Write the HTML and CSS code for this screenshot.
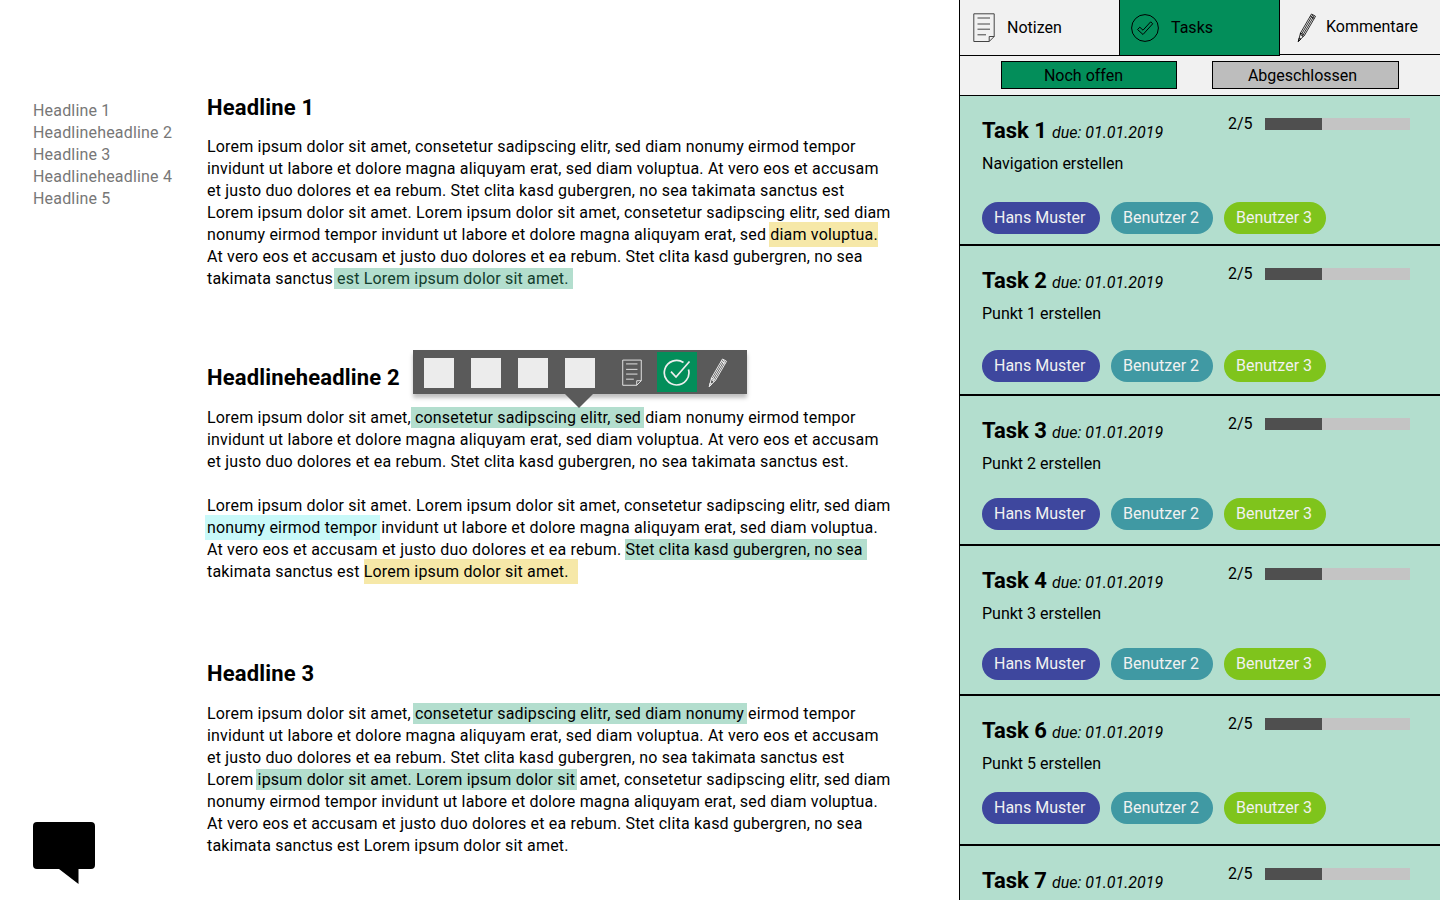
FILE: index.html
```html
<!DOCTYPE html>
<html lang="de">
<head>
<meta charset="utf-8">
<title>Tasks</title>
<link rel="stylesheet" href="styles.css">
</head>
<body>
<svg class="defs" aria-hidden="true">
  <symbol id="note" viewBox="0 0 22 30"><path d="M.8.8h20.4v22.7l-5 5H.8zM16.2 28.500v-5h5M4.500 5h12.500M4.500 11h12.500M4.500 16.200h12.500M4.500 21.800h8.500"/></symbol>
  <symbol id="pencil" viewBox="0 0 20 30"><path d="M14.500 1l4 2.300L7.500 22.300l-4-2.300zM15.800 1.800L4.800 20.800M17.200 2.600L6.200 21.600M13.300 3.200l4 2.300M3.500 20L1.300 28.500l6.200-6.200M3.500 20l.5 2.300 1.700-.3.100 2M1.300 28.500l.9-3.500 1.700 1z"/></symbol>
</svg>
<div class="app">
  <aside class="outline">
    <nav class="toc"><a>Headline 1</a><a>Headlineheadline 2</a><a>Headline 3</a><a>Headlineheadline 4</a><a>Headline 5</a></nav>
    <svg class="chat" viewBox="0 0 62 62"><path d="M4 0h54a4 4 0 0 1 4 4v39a4 4 0 0 1-4 4H45.500v15L26 47H4a4 4 0 0 1-4-4V4a4 4 0 0 1 4-4z"/></svg>
  </aside>
  <main class="doc">
    <section class="s1">
      <h2>Headline 1</h2>
      <p>Lorem ipsum dolor sit amet, consetetur sadipscing elitr, sed diam nonumy eirmod tempor<br>invidunt ut labore et dolore magna aliquyam erat, sed diam voluptua. At vero eos et accusam<br>et justo duo dolores et ea rebum. Stet clita kasd gubergren, no sea takimata sanctus est<br>Lorem ipsum dolor sit amet. Lorem ipsum dolor sit amet, consetetur sadipscing elitr, sed diam<br>nonumy eirmod tempor invidunt ut labore et dolore magna aliquyam erat, sed <mark class="yellow m1">diam voluptua.</mark><br>At vero eos et accusam et justo duo dolores et ea rebum. Stet clita kasd gubergren, no sea<br>takimata sanctus <mark class="m2">est Lorem ipsum dolor sit amet.</mark></p>
    </section>
    <section class="s2">
      <div class="head"><h2>Headlineheadline 2</h2>
        <div class="toolbar">
          <i class="swatch"></i><i class="swatch"></i><i class="swatch"></i><i class="swatch"></i>
          <svg class="t-note"><use href="#note"/></svg>
          <span class="t-check"><svg viewBox="0 0 28 28"><path d="M25.500 11.500A12.300 12.300 0 1 1 20.500 4.500M8 13.700l5 5.300L26.500 3.500"/></svg></span>
          <svg class="t-pencil"><use href="#pencil"/></svg>
        </div>
      </div>
      <p>Lorem ipsum dolor sit amet, <mark class="m3">consetetur sadipscing elitr, sed</mark> diam nonumy eirmod tempor<br>invidunt ut labore et dolore magna aliquyam erat, sed diam voluptua. At vero eos et accusam<br>et justo duo dolores et ea rebum. Stet clita kasd gubergren, no sea takimata sanctus est.<br><br>Lorem ipsum dolor sit amet. Lorem ipsum dolor sit amet, consetetur sadipscing elitr, sed diam<br><mark class="cyan m4">nonumy eirmod tempor</mark> invidunt ut labore et dolore magna aliquyam erat, sed diam voluptua.<br>At vero eos et accusam et justo duo dolores et ea rebum. <mark class="m5">Stet clita kasd gubergren, no sea</mark><br>takimata sanctus est <mark class="yellow m6">Lorem ipsum dolor sit amet.</mark></p>
    </section>
    <section class="s3">
      <h2>Headline 3</h2>
      <p>Lorem ipsum dolor sit amet, <mark class="m7">consetetur sadipscing elitr, sed diam nonumy</mark> eirmod tempor<br>invidunt ut labore et dolore magna aliquyam erat, sed diam voluptua. At vero eos et accusam<br>et justo duo dolores et ea rebum. Stet clita kasd gubergren, no sea takimata sanctus est<br>Lorem <mark class="m8">ipsum dolor sit amet. Lorem ipsum dolor sit</mark> amet, consetetur sadipscing elitr, sed diam<br>nonumy eirmod tempor invidunt ut labore et dolore magna aliquyam erat, sed diam voluptua.<br>At vero eos et accusam et justo duo dolores et ea rebum. Stet clita kasd gubergren, no sea<br>takimata sanctus est Lorem ipsum dolor sit amet.</p>
    </section>
  </main>
  <aside class="panel">
    <div class="tabs">
      <div class="tab notes"><svg><use href="#note"/></svg><span>Notizen</span></div>
      <div class="tab tasks-tab"><svg viewBox="0 0 28 28"><circle cx="14" cy="14" r="13.400"/><path d="M6.500 15.500l2.300-2.300 3.200 3 7.700-8.400 2 2L12 20.500z"/></svg><span>Tasks</span></div>
      <div class="tab comments"><svg><use href="#pencil"/></svg><span>Kommentare</span></div>
    </div>
    <div class="filters"><button class="open">Noch offen</button><button class="done">Abgeschlossen</button></div>
    <div class="list">
      <article class="task"><header><h3>Task 1</h3><em>due: 01.01.2019</em><div class="prog"><span>2/5</span><div class="bar"><i></i></div></div></header><p>Navigation erstellen</p><footer><b>Hans Muster</b><b>Benutzer 2</b><b>Benutzer 3</b></footer></article>
      <article class="task up2"><header><h3>Task 2</h3><em>due: 01.01.2019</em><div class="prog"><span>2/5</span><div class="bar"><i></i></div></div></header><p>Punkt 1 erstellen</p><footer><b>Hans Muster</b><b>Benutzer 2</b><b>Benutzer 3</b></footer></article>
      <article class="task up4"><header><h3>Task 3</h3><em>due: 01.01.2019</em><div class="prog"><span>2/5</span><div class="bar"><i></i></div></div></header><p>Punkt 2 erstellen</p><footer><b>Hans Muster</b><b>Benutzer 2</b><b>Benutzer 3</b></footer></article>
      <article class="task up4"><header><h3>Task 4</h3><em>due: 01.01.2019</em><div class="prog"><span>2/5</span><div class="bar"><i></i></div></div></header><p>Punkt 3 erstellen</p><footer><b>Hans Muster</b><b>Benutzer 2</b><b>Benutzer 3</b></footer></article>
      <article class="task up10"><header><h3>Task 6</h3><em>due: 01.01.2019</em><div class="prog"><span>2/5</span><div class="bar"><i></i></div></div></header><p>Punkt 5 erstellen</p><footer><b>Hans Muster</b><b>Benutzer 2</b><b>Benutzer 3</b></footer></article>
      <article class="task"><header><h3>Task 7</h3><em>due: 01.01.2019</em><div class="prog"><span>2/5</span><div class="bar"><i></i></div></div></header></article>
    </div>
  </aside>
</div>
</body>
</html>
```
FILE: styles.css
```css
* { box-sizing: border-box; }
body { margin: 0; background: #fff; color: #000; font: 16px/22px Roboto, sans-serif; letter-spacing: .18px; }
h2, h3, p { margin: 0; }
svg { fill: none; stroke: currentColor; flex: none; }
.defs { position: absolute; width: 0; height: 0; }
.app { display: flex; width: 1440px; height: 900px; overflow: hidden; }

.outline { width: 207px; padding: 100px 0 16px 33px; display: flex; flex-direction: column; justify-content: space-between; }
.toc { display: flex; flex-direction: column; color: #777; }
.chat { width: 62px; height: 62px; fill: #000; stroke: none; }

.doc { width: 752px; white-space: nowrap; }
.doc h2 { font-size: 22px; line-height: 26px; font-weight: 700; letter-spacing: .17px; }
.s1 { padding-top: 95px; height: 350px; }
.s1 p { margin-top: 15px; }
.head { display: flex; height: 44px; }
.head h2 { width: 206px; padding-top: 15px; }
.s2 { height: 311px; }
.s2 p { margin-top: 13px; }
.s3 p { margin-top: 16px; }

mark { color: #000; background: #b3dece; padding: 1px var(--r) 1px var(--l); margin: 0 calc(-1 * var(--r)) 0 calc(-1 * var(--l)); }
.yellow { background: #f6e8a8; padding-top: 3px; padding-bottom: 3px; }
.cyan { background: #c8f9f9; padding-top: 3px; padding-bottom: 3px; }
.m1 { --l: 1px; --r: 0px; }
.m2 { --l: 3px; --r: 4px; color: #123c2c; }
.m3 { --l: 4px; --r: 3px; }
.m4 { --l: 2px; --r: 3px; }
.m5 { --l: 1px; --r: 4px; }
.m6 { --l: 0px; --r: 9px; }
.m7 { --l: 2px; --r: 3px; }
.m8 { --l: 2px; --r: 2px; }

.toolbar { position: relative; width: 334px; height: 44px; padding: 0 11px; background: #5a5a5a; display: flex; align-items: center; color: #eee; box-shadow: 0 4px 4px rgba(0,0,0,.25); }
.toolbar::after { content: ""; position: absolute; left: 151px; top: 43px; border: 15.500px solid transparent; border-bottom: 0; border-top-color: #5a5a5a; }
.swatch { width: 30px; height: 30px; margin: 2px 17px 0 0; background: #ececec; }
.t-note { width: 20px; height: 28px; margin: 2px 0 0 10px; }
.t-check { width: 40px; height: 40px; margin-left: 15px; background: #038e5a; display: flex; align-items: center; justify-content: center; }
.t-check svg { width: 28px; height: 28px; stroke-width: 1.700; }
.t-pencil { width: 20px; height: 30px; margin: 2px 0 0 11px; }

.panel { width: 481px; border-left: 1px solid #000; background: #b3dece; white-space: nowrap; letter-spacing: 0; }
.tabs { display: flex; height: 56px; background: #f1f1f1; }
.tab { display: flex; align-items: center; border-bottom: 1px solid #000; }
.tab.notes { width: 160px; padding-left: 13px; gap: 12px; border-right: 1px solid #000; }
.notes svg { width: 22px; height: 30px; color: #444; }
.tab.tasks-tab { width: 160px; padding-left: 11px; gap: 12px; border-right: 1px solid #000; background: #038e5a; }
.tasks-tab svg { width: 28px; height: 28px; }
.tab.comments { width: 160px; height: 55px; padding-left: 17px; gap: 9px; }
.comments svg { width: 20px; height: 30px; stroke-width: .8; margin-top: 2px; }
.filters { height: 40px; padding: 5px 41px; display: flex; gap: 35px; background: #f1f1f1; border-bottom: 1px solid #000; }
.filters button { height: 28px; padding: 2px 0 0; border: 1px solid #000; border-radius: 0; font: inherit; color: #000; letter-spacing: 0; }
.filters .open { width: 176px; padding-right: 11px; background: #038e5a; }
.filters .done { width: 187px; padding-right: 6px; background: #bdbdbd; }

.task { height: 150px; border-bottom: 2px solid #000; padding: 22px 30px 10px 22px; display: flex; flex-direction: column; }
.task header { display: flex; height: 26px; align-items: baseline; }
.task h3 { font-size: 22px; line-height: 26px; margin-right: 5px; }
.prog { margin-left: auto; display: flex; align-self: flex-start; height: 12px; align-items: center; gap: 12.500px; }
.bar { width: 145px; height: 12px; background: #c4c4c4; }
.bar i { display: block; width: 57px; height: 12px; background: #4f4f4f; }
.task p { margin-top: 9px; }
.task footer { display: flex; gap: 11px; margin-top: auto; color: #f1f1f1; }
.task footer b { width: 102px; height: 32px; padding-left: 12px; border-radius: 16px; background: #4099a3; font-weight: 400; line-height: 31px; }
.task footer b:first-child { width: 118px; background: #3e479e; }
.task footer b:last-child { background: #7fc41c; }
.up2 { padding-bottom: 12px; }
.up4 { padding-bottom: 14px; }
.up10 { padding-bottom: 20px; }
```
